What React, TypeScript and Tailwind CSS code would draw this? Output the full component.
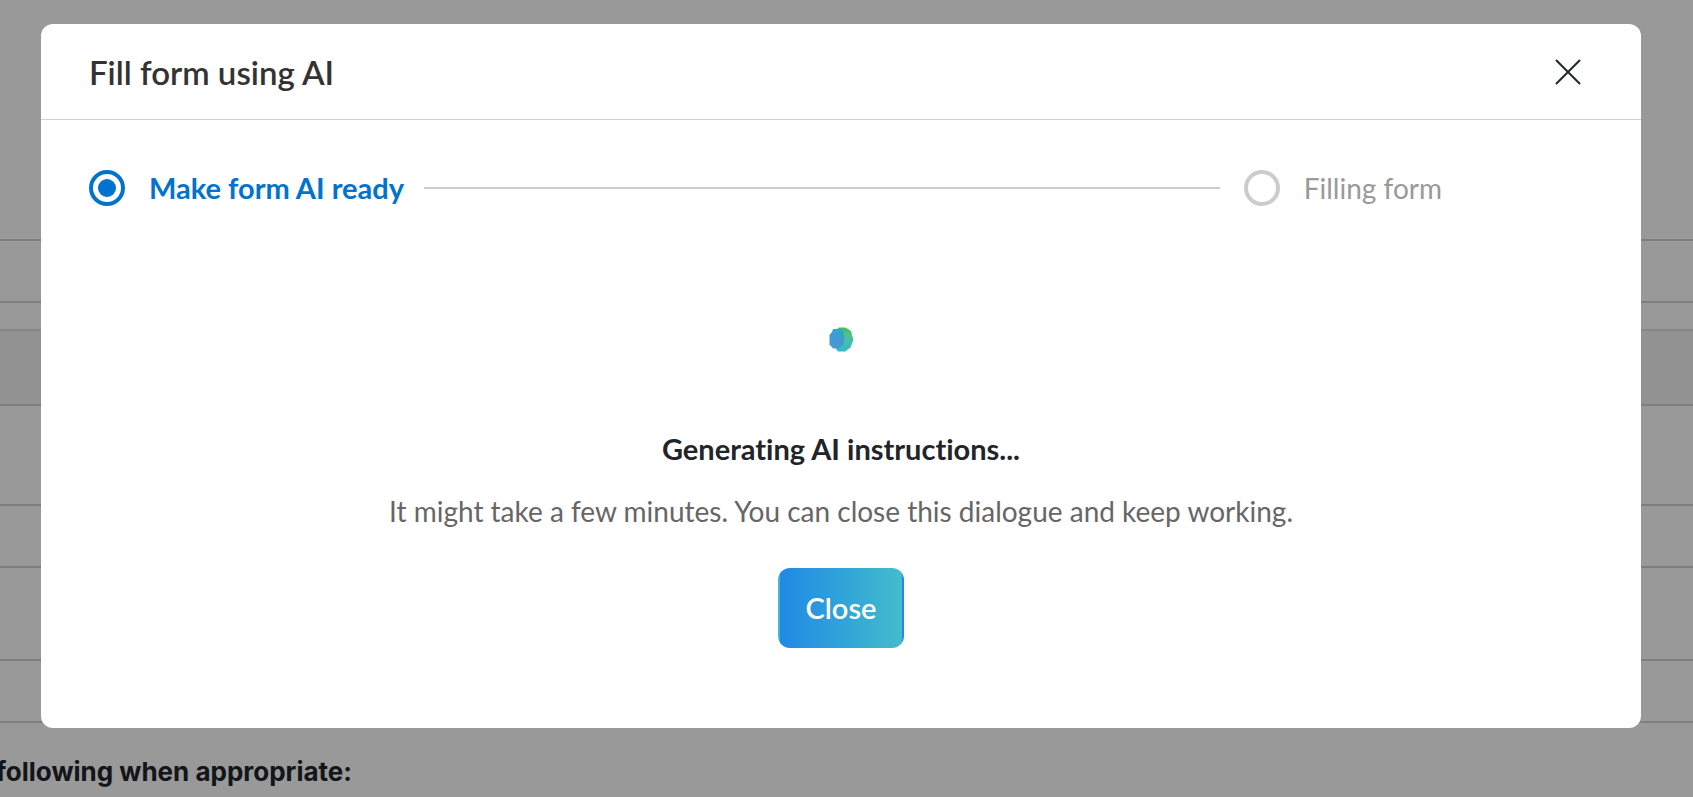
function BackgroundPage() {
  return (
    <div className="flex flex-col min-h-screen bg-white">
      <div className="h-[239px]" />
      <div className="h-16 border-y-2 border-[#ced4da]" />
      <div className="h-[26px]" />
      <div className="h-[77px] bg-[#f4f4f4] border-t-2 border-t-[#dfdee5] border-b-2 border-b-[#d4d4d4]" />
      <div className="h-[98px]" />
      <div className="h-16 border-y-2 border-[#ced4da]" />
      <div className="h-[91px]" />
      <div className="h-16 border-y-2 border-[#ced4da]" />
      <p className="mt-[33px] -ml-1 font-['Inter',sans-serif] text-[26px] leading-8 font-bold text-[#212529]">
        following when appropriate:
      </p>
    </div>
  );
}

function Stepper() {
  return (
    <ol className="flex items-center pr-[151px] pb-0.5 leading-[34px]">
      <li className="flex items-center gap-6 text-[29px] font-bold text-[#0073cf]" aria-current="step">
        <span className="w-9 h-9 rounded-full border-4 border-[#0073cf] flex items-center justify-center">
          <span className="w-[18px] h-[18px] rounded-full bg-[#0073cf]" />
        </span>
        Make form AI ready
      </li>
      <li className="flex-1 h-0.5 ml-5 mr-6 bg-[#cccccc]" aria-hidden="true" />
      <li className="flex items-center gap-6 text-[28px] text-[#999999]">
        <span className="w-9 h-9 rounded-full border-4 border-[#cccccc]" />
        Filling form
      </li>
    </ol>
  );
}

function Loader() {
  return (
    <svg width="25" height="25" viewBox="0 0 25 25" role="img" aria-label="Loading">
      <defs>
        <linearGradient id="leaf" x1="0" y1="0" x2="0" y2="1">
          <stop offset="0" stopColor="#3fbf62" />
          <stop offset="0.4" stopColor="#50c298" />
          <stop offset="1" stopColor="#30b8cc" />
        </linearGradient>
        <linearGradient id="drop" x1="0.7" y1="0" x2="0.3" y2="1">
          <stop offset="0" stopColor="#27abc9" />
          <stop offset="0.5" stopColor="#4299d6" />
          <stop offset="1" stopColor="#4a98d2" />
        </linearGradient>
      </defs>
      <path d="M10 .5h6l3 1.500 3 2 1 4 1.500 4.500-1.500 4-1.500 4-3.500 2.500-1.500 1.500H9L7 22V3z" fill="url(#leaf)" />
      <path d="M4 2h8l2.500 3.500 1 4-.5 5-2 4.500-3.500 2.500H4L2 19l-1.500-1V8L3 5z" fill="url(#drop)" />
    </svg>
  );
}

function Modal() {
  return (
    <div role="dialog" aria-modal="true" aria-labelledby="modal-title" className="w-full rounded-xl bg-white">
      <div className="h-24 pl-12 pr-[60px] flex items-center justify-between border-b border-[#ced0dc]">
        <h1 id="modal-title" className="text-[33px] leading-[38px] font-semibold text-[#333333]">Fill form using AI</h1>
        <button type="button" aria-label="Close dialog">
          <svg width="26" height="26" viewBox="0 0 26 26" fill="none" stroke="#24262f" strokeWidth="2" strokeLinecap="round">
            <path d="M1.5 1.5l23 23M24.5 1.5l-23 23" />
          </svg>
        </button>
      </div>

      <div className="px-12 pt-[50px] pb-20">
        <Stepper />
        <div className="mt-[119px] flex flex-col items-center text-center">
          <Loader />
          <h2 className="mt-20 text-[29px] leading-[34px] font-bold text-[#212529]">Generating AI instructions...</h2>
          <p className="mt-7 text-[28px] leading-[34px] text-[#666666]">
            It might take a few minutes. You can close this dialogue and keep working.
          </p>
          <button
            type="button"
            className="mt-10 h-20 px-[26px] rounded-xl border-2 border-transparent bg-linear-to-r from-[#2189e4] to-[#44bbcc] text-[29px] leading-[34px] font-semibold text-white"
          >
            Close
          </button>
        </div>
      </div>
    </div>
  );
}

export default function App() {
  return (
    <div className="relative min-h-screen overflow-hidden font-['Lato',sans-serif] [font-variant-ligatures:none]">
      <BackgroundPage />
      <div className="absolute inset-0 bg-black/40 pt-6 pl-[41px] pr-[52px]">
        <Modal />
      </div>
    </div>
  );
}
